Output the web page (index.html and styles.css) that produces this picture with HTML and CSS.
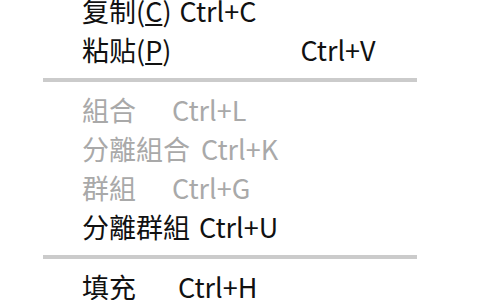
FILE: index.html
```html
<!DOCTYPE html>
<html lang="zh">
<head>
<meta charset="utf-8">
<title>Context menu</title>
<link rel="stylesheet" href="styles.css">
</head>
<body>
<div class="menu">
  <div class="item"><span class="label">复制(<u>C</u>)</span><span class="sc sc-8">Ctrl+C</span></div>
  <div class="item"><span class="label">粘贴(<u>P</u>)</span><span class="sc sc-129">Ctrl+V</span></div>
  <div class="sep"></div>
  <div class="item disabled"><span class="label">組合</span><span class="sc sc-36">Ctrl+L</span></div>
  <div class="item disabled"><span class="label">分離組合</span><span class="sc sc-11">Ctrl+K</span></div>
  <div class="item disabled"><span class="label">群組</span><span class="sc sc-36">Ctrl+G</span></div>
  <div class="item"><span class="label">分離群組</span><span class="sc sc-9">Ctrl+U</span></div>
  <div class="sep"></div>
  <div class="item"><span class="label">填充</span><span class="sc sc-42">Ctrl+H</span></div>
</div>
</body>
</html>
```
FILE: styles.css
```css
html, body {
  margin: 0;
  padding: 0;
  background: #ffffff;
  overflow: hidden;
}

.menu {
  width: 380px;
  margin: -9px 0 0 40px;
  background: #ffffff;
  font-family: "Noto Sans CJK TC", "Noto Sans CJK SC", sans-serif;
  font-size: 27px;
  color: #111111;
}

.item {
  display: flex;
  align-items: center;
  height: 39px;
  line-height: 39px;
  padding-left: 42px;
  white-space: nowrap;
}

.item.disabled {
  color: #a9a9a9;
}

.label u {
  text-decoration-thickness: 2px;
  text-underline-offset: 2px;
}

.sc-8 { margin-left: 8px; }
.sc-9 { margin-left: 9px; }
.sc-11 { margin-left: 11px; }
.sc-36 { margin-left: 36px; }
.sc-42 { margin-left: 42px; }
.sc-129 { margin-left: 129px; }

.sep {
  height: 21px;
  display: flex;
  align-items: center;
  padding: 0 3px;
}

.sep::before {
  content: "";
  flex: 1;
  height: 4px;
  background: #cbcbcb;
}
```
